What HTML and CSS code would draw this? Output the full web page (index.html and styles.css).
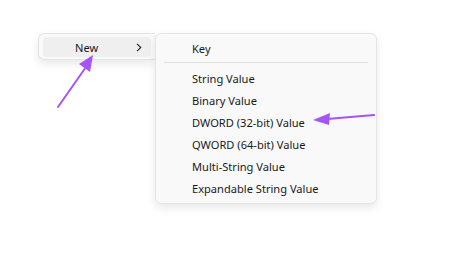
FILE: index.html
```html
<!DOCTYPE html>
<html>
<head>
<meta charset="utf-8">
<link rel="stylesheet" href="styles.css">
</head>
<body>
<div class="stage">
  <div class="menu menu-main">
    <div class="item item-active">
      <span class="label">New</span>
      <svg class="chev" width="6" height="9" viewBox="0 0 6 9"><path d="M1 0.8 L4.8 4.5 L1 8.2" stroke="#222" stroke-width="1.1" fill="none"/></svg>
    </div>
  </div>
  <div class="menu menu-sub">
    <div class="row">Key</div>
    <div class="sep"></div>
    <div class="row">String Value</div>
    <div class="row">Binary Value</div>
    <div class="row">DWORD (32-bit) Value</div>
    <div class="row">QWORD (64-bit) Value</div>
    <div class="row">Multi-String Value</div>
    <div class="row">Expandable String Value</div>
  </div>
</div>
<svg class="arrows" width="469" height="253" viewBox="0 0 469 253">
  <path d="M58 107 L86 67" stroke="#a654f5" stroke-width="2" fill="none" stroke-linecap="round"/>
  <polygon points="93,55 79,64 90,72" fill="#a654f5"/>
  <path d="M374 115 L327 119" stroke="#a654f5" stroke-width="2.2" fill="none" stroke-linecap="round"/>
  <polygon points="313,120 330,113 329,125" fill="#a654f5"/>
</svg>
</body>
</html>
```

FILE: styles.css
```css
html, body {
  margin: 0;
  padding: 0;
  background: #ffffff;
}
body {
  width: 469px;
  height: 253px;
  overflow: hidden;
  position: relative;
  font-family: "Noto Sans", "Open Sans", sans-serif;
  font-size: 11.1px;
  color: #1a1a1a;
}
.stage {
  display: flex;
  align-items: flex-start;
  padding: 33px 0 0 38px;
}
.menu {
  background: #f9f9f9;
  border: 1px solid #e4e4e4;
  border-radius: 6px;
  box-shadow: 0 4px 10px rgba(0, 0, 0, 0.09);
  box-sizing: border-box;
}
.menu-main {
  width: 117px;
  height: 27px;
  padding: 3px 4px;
  border-right: none;
  border-radius: 6px 0 0 6px;
}
.item {
  display: flex;
  align-items: center;
  height: 20px;
  border-radius: 4px;
}
.item-active {
  background: #efefef;
}
.label {
  padding-left: 32px;
  flex: 1;
  line-height: 20px;
  padding-top: 1px;
}
.chev {
  margin-right: 9px;
  display: block;
}
.menu-sub {
  width: 222px;
  padding: 3px 0 4px;
}
.row {
  height: 22px;
  line-height: 23px;
  padding-left: 36px;
  white-space: nowrap;
}
.sep {
  height: 1px;
  background: #e0e0e0;
  margin: 3px 8px 4px;
}
.arrows {
  position: absolute;
  left: 0;
  top: 0;
  pointer-events: none;
}
```
